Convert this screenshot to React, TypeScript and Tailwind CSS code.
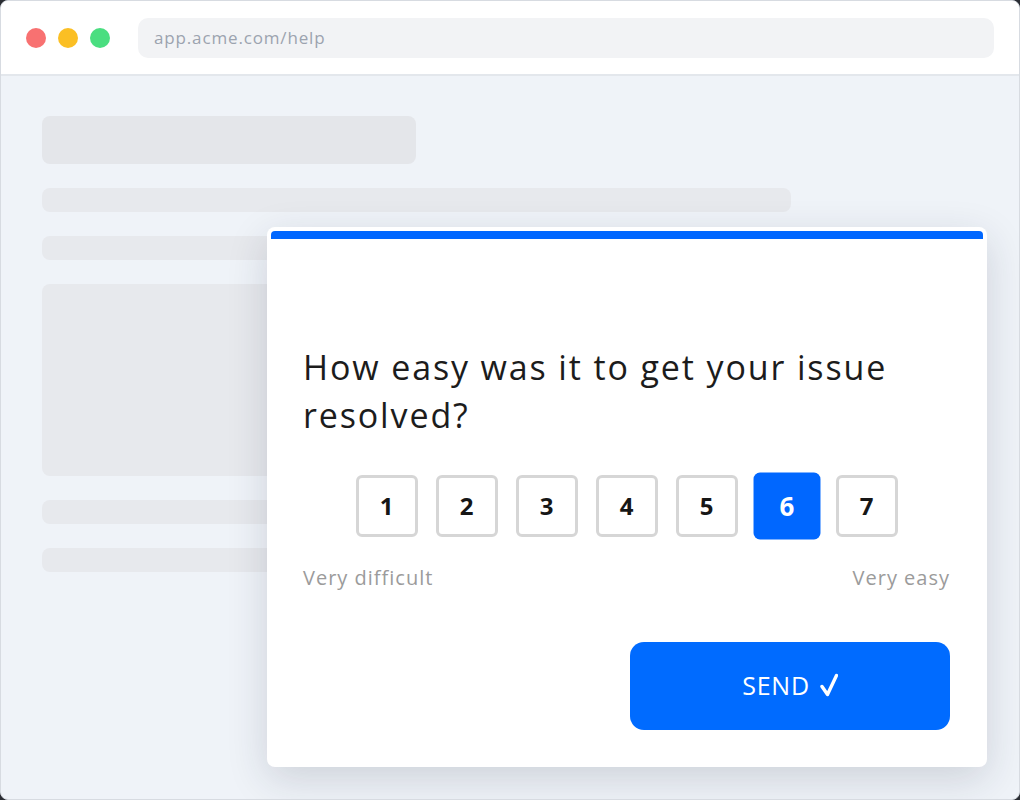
import React, { useState } from "react";

export default function App() {
  const [score, setScore] = useState(6);
  const scores = [1, 2, 3, 4, 5, 6, 7];

  return (
    <div className="w-[1020px] h-[800px] bg-[#2a2d33]" style={{ fontFamily: "'Open Sans', Lato, sans-serif" }}>
      <div className="relative w-full h-full rounded-[8px] overflow-hidden border border-[#d7dbe1] bg-[#eff3f8] flex flex-col">
        {/* browser chrome */}
        <div className="h-[75px] shrink-0 bg-white border-b-2 border-[#e3e7ec] flex items-center pl-[25px] pr-[25px]">
          <div className="flex items-center gap-[12px]">
            <span className="w-[20px] h-[20px] rounded-full bg-[#f87171]" />
            <span className="w-[20px] h-[20px] rounded-full bg-[#fbbf24]" />
            <span className="w-[20px] h-[20px] rounded-full bg-[#4ade80]" />
          </div>
          <div className="ml-[28px] flex-1 h-[40px] rounded-[10px] bg-[#f2f3f5] flex items-center px-[16px] text-[17px] tracking-[0.05em] text-[#9ca3af]">
            app.acme.com/help
          </div>
        </div>

        {/* page skeleton */}
        <div className="flex flex-col gap-[24px] pl-[41px] pt-[40px]">
          <div className="w-[374px] h-[48px] rounded-[8px] bg-[#e4e6ea]" />
          <div className="w-[749px] h-[24px] rounded-[8px] bg-[#e7e9ed]" />
          <div className="w-[560px] h-[24px] rounded-[8px] bg-[#e7e9ed]" />
          <div className="w-[560px] h-[192px] rounded-[8px] bg-[#e7e9ed]" />
          <div className="w-[560px] h-[24px] rounded-[8px] bg-[#e7e9ed]" />
          <div className="w-[560px] h-[24px] rounded-[8px] bg-[#e7e9ed]" />
        </div>

        {/* survey card */}
        <div className="absolute left-[266px] top-[226px] w-[720px] h-[540px] bg-white rounded-[8px] p-[4px] shadow-[0_12px_40px_rgba(30,40,60,0.16)]">
          <div className="h-[8px] bg-[#0067ff] rounded-t-[4px]" />
          <div className="pl-[32px] pr-[33px] pt-[104px]">
            <h2 className="text-[34px] leading-[48px] tracking-[0.055em] text-[#1c1c1c] font-normal">
              How easy was it to get your issue resolved?
            </h2>
            <div className="mt-[36px] flex justify-center gap-[18px]">
              {scores.map((n) => (
                <button
                  key={n}
                  onClick={() => setScore(n)}
                  className={`w-[62px] h-[62px] rounded-[6px] flex items-center justify-center text-[24px] font-bold ${
                    score === n
                      ? "bg-[#0067ff] text-white scale-[1.08]"
                      : "bg-white text-[#161616] border-[3px] border-[#d6d6d6]"
                  }`}
                >
                  {n}
                </button>
              ))}
            </div>
            <div className="mt-[29px] flex justify-between text-[20px] leading-[24px] tracking-[0.05em] text-[#9b9b9b]">
              <span>Very difficult</span>
              <span>Very easy</span>
            </div>
            <div className="mt-[52px] flex justify-end">
              <button className="w-[320px] h-[88px] rounded-[14px] bg-[#006bff] text-white text-[25px] tracking-[0.03em] flex items-center justify-center gap-[10px]">
                <span>SEND</span>
                <svg width="18" height="24" viewBox="0 0 18 24" className="-mt-[2px]">
                  <path d="M2 13.5 L7.5 21.5 L16.5 2.5" fill="none" stroke="white" strokeWidth="3.4" strokeLinecap="round" strokeLinejoin="round" />
                </svg>
              </button>
            </div>
          </div>
        </div>
      </div>
    </div>
  );
}
